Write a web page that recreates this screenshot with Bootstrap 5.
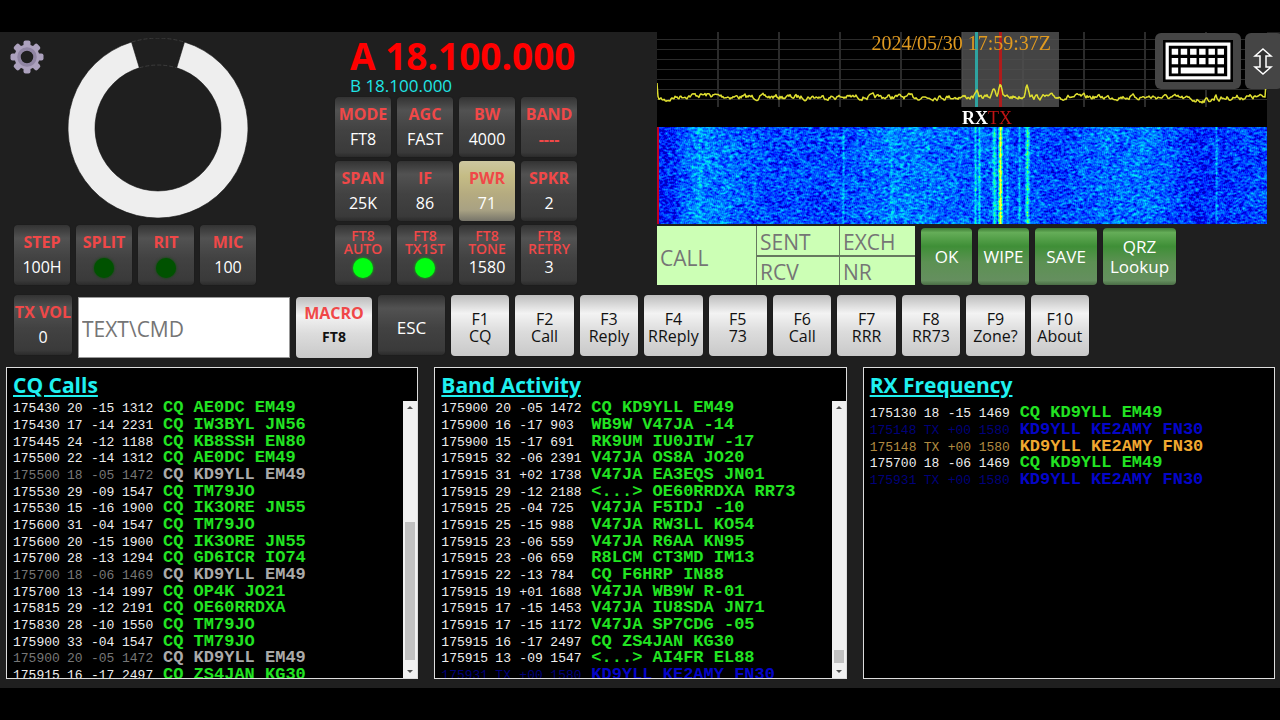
<!DOCTYPE html>
<html lang="en" data-bs-theme="dark">
<head>
<meta charset="utf-8">
<meta name="viewport" content="width=device-width, initial-scale=1">
<title>Transceiver control</title>
<link href="https://cdn.jsdelivr.net/npm/bootstrap@5.3.0/dist/css/bootstrap.min.css" rel="stylesheet">
<style>
  body { background: #000; font-family: "Open Sans", "Noto Sans", sans-serif; font-size: 16px; overflow-x: hidden; }
  .rig { background: #1f1f1f; padding-bottom: 9px; overflow: hidden; }
  .rig-top { display: grid; grid-template-columns: 325px 322px minmax(0, 1fr); padding-left: 10px; }
  .gear { width: 34px; height: 34px; }
  .dial { margin-top: 6px; margin-bottom: 7px; }
  .key-grid { display: grid; grid-template-columns: repeat(4, 56px); gap: 4px 6px; }

  .key { border: 0; border-radius: 4px; padding: 0; overflow: hidden; text-align: center; white-space: nowrap; color: #fff; box-shadow: 0 0 1px #161616; }
  .key-dark { height: 60px; padding-top: 5px; display: flex; flex-direction: column; align-items: center; background: linear-gradient(#333 0, #525252 22%, #424242 55%, #3a3a3a 92%, #2b2b2b 100%); }
  .key-gold { background: linear-gradient(#cdc7a0 0, #c5bc85 25%, #b5ab80 55%, #a8a183 82%, #77756a 100%); }
  .key-light { height: 61px; color: #111; background: linear-gradient(#bdbdbd 0, #f3f3f3 30%, #dcdcdc 60%, #c9c9c9 100%); }
  .key-green { height: 57px; font-size: 17px; line-height: 20px; background: linear-gradient(#3c7a34 0, #65ad58 8%, #3f8f37 32%, #5c9153 60%, #658f5f 92%, #4a6d45 100%); }
  .key-name { color: #f04848; font-weight: 700; line-height: 25px; }
  .key-name-2 { color: #f04848; font-size: 14px; font-weight: 600; line-height: 13px; margin-top: -1px; }
  .key-value { line-height: 25px; }
  .led { width: 20px; height: 20px; margin-top: 3px; border-radius: 50%; background: #0f1; box-shadow: 0 0 3px #0c0; flex: none; }
  .led-off { background: #005200; box-shadow: 0 0 3px #005200; }

  .vfo-a { color: #f00; font-size: 37px; font-weight: 700; line-height: 42px; padding: 3px 0 0 15px; }
  .vfo-b { color: #1fe5e5; font-size: 17px; line-height: 17px; padding-left: 15px; margin-bottom: 3px; }

  .scope { margin: 0 13px 2px 0; }
  .scope canvas { display: block; width: 100%; }
  .scope-clock { color: #e09a20; font: 20px/22px "Liberation Serif", serif; position: absolute; right: 216px; top: 0; }
  .scope-marks { font: 18px/20px "Liberation Serif", serif; color: #c01414; position: absolute; left: 50%; top: 76px; }
  .scope-tools { position: absolute; top: 1px; right: -16px; gap: 4px; }
  .tool { background: #454545; border: 0; border-radius: 6px; height: 56px; padding: 0; }

  .log-form { display: grid; grid-template: 29px 28px / 99px 82px 75px; gap: 2px 1px; background: #66785f; }
  .log-form input { border: 0; border-radius: 0; padding: 2px 3px 0; font-size: 21px; line-height: 26px; background: #ccffb5; color: #333; min-width: 0; }
  .log-form .call-box { grid-row: span 2; padding-top: 4px; }
  input::placeholder { color: #757575; opacity: 1; }
  .log-actions { gap: 6px; margin-left: 6px; }
  .log-actions .key { width: 51px; }
  .log-actions .key:nth-child(3) { width: 62px; }
  .log-actions .key:nth-child(4) { width: 73px; }

  .cmd-row { padding-left: 14px; margin-top: 10px; gap: 6px; }
  .cmd-box { width: 212px; height: 61px; background: #fff; border: 1px solid #999; border-radius: 0; padding: 2px 3px 0; font-size: 21px; color: #222; }
  .cmd-row .cmd-box, .cmd-row .key-macro { margin-top: 2px; }
  .key-vol { width: 58px; }
  .key-macro { width: 76px; padding-top: 4px; }
  .key-mode { font-size: 14px; line-height: 22px; }
  .key-esc { width: 67px; font-size: 17px; justify-content: center; }
  .fn-keys { display: grid; grid-template-columns: repeat(10, minmax(0, 1fr)); gap: 6px; flex: 0 1 638px; }
  .fn-keys .key { line-height: 17px; padding-top: 4px; }

  .boards { display: grid; grid-template-columns: repeat(3, minmax(0, 1fr)); gap: 16px; padding: 0 5px 0 6px; margin-top: 9px; }
  .board { background: #000; border: 1px solid #ddd; height: 312px; overflow: hidden; display: flex; flex-direction: column; }
  .board h2 { color: #1ff0f0; font-size: 21px; font-weight: 700; line-height: 33px; margin: 1px 0 0; padding-left: 6px; text-decoration: underline; text-decoration-thickness: 2px; text-underline-offset: 2px; height: 32px; flex: none; }
  .board-scroll { flex: 1; min-height: 0; display: flex; }
  .board-view { flex: 1; overflow: hidden; padding-left: 6px; }
  .board-late { padding-top: 5px; }
  .decodes { font-family: "Liberation Mono", monospace; font-size: 13px; color: #eee; white-space: nowrap; border-collapse: collapse; }
  .decodes td { padding: 0; height: 17px; line-height: 12px; vertical-align: baseline; }
  .decodes tr:nth-child(3n) td { height: 16px; }
  .decodes .c-time { width: 54px; }
  .decodes .c-db { width: 24px; }
  .decodes .c-dt { width: 31px; }
  .decodes .c-hz { width: 41px; }
  .decodes .c-msg { font-size: 17px; line-height: 14px; font-weight: 700; color: #22e322; }
  .decodes .worked { color: #777; }
  .decodes .worked .c-msg { color: #aaa; }
  .decodes .sent { color: #00007a; }
  .decodes .sent .c-msg { color: #0505c8; }
  .decodes .mine { color: #b08a40; }
  .decodes .mine .c-msg { color: #f0a830; }

  .bar { width: 14px; background: #f1f1f1; display: flex; flex-direction: column; align-items: center; justify-content: space-between; }
  .bar svg { width: 14px; height: 13px; display: block; flex: none; }
  .bar-lane { flex: 1; width: 10px; display: flex; flex-direction: column; justify-content: flex-end; }
  .bar-thumb { background: #c1c1c1; }
</style>
</head>
<body class="min-vh-100 d-flex flex-column justify-content-center">
<main class="rig w-100">
  <div class="rig-top">
    <section>
      <div class="d-flex gap-4">
        <a href="#settings" aria-label="Settings" class="mt-2">
          <svg class="gear" viewBox="0 0 34 34" aria-hidden="true">
            <g fill="#aca1bd">
              <g id="cog"><rect x="13.5" y=".5" width="7" height="33" rx="2"/><rect x=".5" y="13.5" width="33" height="7" rx="2"/></g>
              <use href="#cog" transform="rotate(45 17 17)"/>
              <circle cx="17" cy="17" r="12.5"/>
            </g>
            <circle cx="17" cy="17" r="8" fill="#1f1f1f" stroke="#9085a3" stroke-width="3.5"/>
            <circle cx="17" cy="17" r="5.5" fill="#1f1f1f"/>
          </svg>
        </a>
        <svg width="180" height="180" viewBox="0 0 180 180" class="dial" role="img" aria-label="Tuning dial">
          <path d="M63.8 4A90 90 0 0 1 116.200 4M71.500 29.800A63 63 0 0 1 108.500 29.800" fill="none" stroke="#3c3c3c" stroke-width="1" stroke-dasharray="4 2"/>
          <path d="M116.500 4A90 90 0 1 1 63.500 4L71.300 29.800A63 63 0 1 0 108.700 29.800Z" fill="#eee" stroke="#111" stroke-width=".6"/>
        </svg>
      </div>
      <div class="key-grid ms-1">
        <button class="key key-dark"><span class="key-name">STEP</span><span class="key-value">100H</span></button>
        <button class="key key-dark"><span class="key-name">SPLIT</span><span class="led led-off"></span></button>
        <button class="key key-dark"><span class="key-name">RIT</span><span class="led led-off"></span></button>
        <button class="key key-dark"><span class="key-name">MIC</span><span class="key-value">100</span></button>
      </div>
    </section>

    <section>
      <div class="vfo-a">A 18.100.000</div>
      <div class="vfo-b">B 18.100.000</div>
      <div class="key-grid">
        <button class="key key-dark"><span class="key-name">MODE</span><span class="key-value">FT8</span></button>
        <button class="key key-dark"><span class="key-name">AGC</span><span class="key-value">FAST</span></button>
        <button class="key key-dark"><span class="key-name">BW</span><span class="key-value">4000</span></button>
        <button class="key key-dark"><span class="key-name">BAND</span><span class="key-name">----</span></button>
        <button class="key key-dark"><span class="key-name">SPAN</span><span class="key-value">25K</span></button>
        <button class="key key-dark"><span class="key-name">IF</span><span class="key-value">86</span></button>
        <button class="key key-dark key-gold"><span class="key-name">PWR</span><span class="key-value">71</span></button>
        <button class="key key-dark"><span class="key-name">SPKR</span><span class="key-value">2</span></button>
        <button class="key key-dark"><span class="key-name-2">FT8<br>AUTO</span><span class="led"></span></button>
        <button class="key key-dark"><span class="key-name-2">FT8<br>TX1ST</span><span class="led"></span></button>
        <button class="key key-dark"><span class="key-name-2">FT8<br>TONE</span><span class="key-value">1580</span></button>
        <button class="key key-dark"><span class="key-name-2">FT8<br>RETRY</span><span class="key-value">3</span></button>
      </div>
    </section>

    <section>
      <div class="scope position-relative">
        <canvas id="spectrum" width="610" height="95"></canvas>
        <canvas id="waterfall" width="610" height="97"></canvas>
        <div class="scope-clock">2024/05/30 17:59:37Z</div>
        <div class="scope-marks"><b class="text-white">RX</b><span>TX</span></div>
        <div class="scope-tools d-flex">
          <button class="tool px-2" aria-label="Keyboard">
            <svg width="70" height="42" viewBox="0 0 217 130" aria-hidden="true">
              <path fill="#000" d="M0 0h217v130H0z"/>
              <path fill="none" stroke="#fff" stroke-width="10" d="M13 13h191v104H13z"/>
              <path fill="#fff" d="M27 27h20v19H27zM55 27h20v19H55zM84 27h20v19H84zM112 27h20v19h-20zM141 27h20v19h-20zM169 27h20v19h-20zM27 56h20v19H27zM55 56h20v19H55zM84 56h20v19H84zM112 56h20v19h-20zM141 56h20v19h-20zM169 56h20v19h-20zM27 85h20v19H27zM55 85h105v19H55zM169 85h20v19h-20z"/>
            </svg>
          </button>
          <button class="tool px-2" aria-label="Resize">
            <svg width="22" height="28" viewBox="0 0 22 28" aria-hidden="true"><path d="M10 3l8 7h-5v11h5l-8 7-8-7h5V10H2z" transform="translate(0 -1)" fill="#333" stroke="#fff" stroke-width="1.5"/></svg>
          </button>
        </div>
      </div>
      <div class="d-flex align-items-end">
        <form class="log-form">
          <input class="call-box" placeholder="CALL" aria-label="Call">
          <input placeholder="SENT" aria-label="Sent"><input placeholder="EXCH" aria-label="Exchange">
          <input placeholder="RCV" aria-label="Received"><input placeholder="NR" aria-label="Number">
        </form>
        <div class="log-actions d-flex">
          <button class="key key-green">OK</button>
          <button class="key key-green">WIPE</button>
          <button class="key key-green">SAVE</button>
          <button class="key key-green">QRZ<br>Lookup</button>
        </div>
      </div>
    </section>
  </div>

  <div class="cmd-row d-flex align-items-start">
    <button class="key key-dark key-vol"><span class="key-name">TX VOL</span><span class="key-value">0</span></button>
    <input class="cmd-box" placeholder="TEXT\CMD" aria-label="Text or command">
    <button class="key key-light key-macro d-flex flex-column align-items-center"><span class="key-name">MACRO</span><b class="key-mode">FT8</b></button>
    <button class="key key-dark key-esc">ESC</button>
    <div class="fn-keys">
      <button class="key key-light">F1<br>CQ</button>
      <button class="key key-light">F2<br>Call</button>
      <button class="key key-light">F3<br>Reply</button>
      <button class="key key-light">F4<br>RReply</button>
      <button class="key key-light">F5<br>73</button>
      <button class="key key-light">F6<br>Call</button>
      <button class="key key-light">F7<br>RRR</button>
      <button class="key key-light">F8<br>RR73</button>
      <button class="key key-light">F9<br>Zone?</button>
      <button class="key key-light">F10<br>About</button>
    </div>
  </div>

  <div class="boards">
    <section class="board">
      <h2>CQ Calls</h2>
      <div class="board-scroll">
        <div class="board-view"><table class="decodes" id="cq"></table></div>
        <div class="bar" id="cq-bar"></div>
      </div>
    </section>
    <section class="board">
      <h2>Band Activity</h2>
      <div class="board-scroll">
        <div class="board-view"><table class="decodes" id="band"></table></div>
        <div class="bar" id="band-bar"></div>
      </div>
    </section>
    <section class="board">
      <h2>RX Frequency</h2>
      <div class="board-scroll">
        <div class="board-view board-late"><table class="decodes" id="rx"></table></div>
      </div>
    </section>
  </div>
</main>

<script src="https://cdn.jsdelivr.net/npm/bootstrap@5.3.0/dist/js/bootstrap.bundle.min.js"></script>
<script>
  // Decoded messages: "time dB dt Hz|message|state"
  const logs = {
    cq: [
      '175430 20 -15 1312|CQ AE0DC EM49', '175430 17 -14 2231|CQ IW3BYL JN56', '175445 24 -12 1188|CQ KB8SSH EN80',
      '175500 22 -14 1312|CQ AE0DC EM49', '175500 18 -05 1472|CQ KD9YLL EM49|worked', '175530 29 -09 1547|CQ TM79JO',
      '175530 15 -16 1900|CQ IK3ORE JN55', '175600 31 -04 1547|CQ TM79JO', '175600 20 -15 1900|CQ IK3ORE JN55',
      '175700 28 -13 1294|CQ GD6ICR IO74', '175700 18 -06 1469|CQ KD9YLL EM49|worked', '175700 13 -14 1997|CQ OP4K JO21',
      '175815 29 -12 2191|CQ OE60RRDXA', '175830 28 -10 1550|CQ TM79JO', '175900 33 -04 1547|CQ TM79JO',
      '175900 20 -05 1472|CQ KD9YLL EM49|worked', '175915 16 -17 2497|CQ ZS4JAN KG30'],
    band: [
      '175900 20 -05 1472|CQ KD9YLL EM49', '175900 16 -17 903|WB9W V47JA -14', '175900 15 -17 691|RK9UM IU0JIW -17',
      '175915 32 -06 2391|V47JA OS8A JO20', '175915 31 +02 1738|V47JA EA3EQS JN01', '175915 29 -12 2188|<...> OE60RRDXA RR73',
      '175915 25 -04 725|V47JA F5IDJ -10', '175915 25 -15 988|V47JA RW3LL KO54', '175915 23 -06 559|V47JA R6AA KN95',
      '175915 23 -06 659|R8LCM CT3MD IM13', '175915 22 -13 784|CQ F6HRP IN88', '175915 19 +01 1688|V47JA WB9W R-01',
      '175915 17 -15 1453|V47JA IU8SDA JN71', '175915 17 -15 1172|V47JA SP7CDG -05', '175915 16 -17 2497|CQ ZS4JAN KG30',
      '175915 13 -09 1547|<...> AI4FR EL88', '175931 TX +00 1580|KD9YLL KE2AMY FN30|sent'],
    rx: [
      '175130 18 -15 1469|CQ KD9YLL EM49', '175148 TX +00 1580|KD9YLL KE2AMY FN30|sent', '175148 TX +00 1580|KD9YLL KE2AMY FN30|mine',
      '175700 18 -06 1469|CQ KD9YLL EM49', '175931 TX +00 1580|KD9YLL KE2AMY FN30|sent']
  };
  for (const id in logs) {
    const table = document.getElementById(id);
    for (const line of logs[id]) {
      const [info, msg, state] = line.split('|');
      const row = table.insertRow();
      if (state) row.className = state;
      const cells = info.split(' ').concat(msg);
      ['c-time', 'c-db', 'c-dt', 'c-hz', 'c-msg'].forEach((name, i) => {
        const cell = row.insertCell();
        cell.className = name;
        cell.textContent = cells[i];
      });
    }
  }

  // Scroll bars: thumb size and distance from the end of the lane, in percent
  const arrow = d => `<svg viewBox="0 0 14 13" aria-hidden="true"><path d="${d}" fill="#505050"/></svg>`;
  function scrollBar(id, size, below) {
    document.getElementById(id).innerHTML = arrow('M4 8l3-3 3 3z') +
      `<div class="bar-lane"><div class="bar-thumb" style="height:${size}%"></div><div style="height:${below}%"></div></div>` +
      arrow('M4 5l3 3 3-3z');
  }
  scrollBar('cq-bar', 55, 2);
  scrollBar('band-bar', 5, 1);

  let seed = 7;
  const rnd = () => (seed = (seed * 16807) % 2147483647) / 2147483647;

  // Spectrum trace
  const s = document.getElementById('spectrum').getContext('2d');
  s.fillStyle = '#000'; s.fillRect(0, 0, 610, 95);
  s.fillStyle = '#2b2b2b';
  for (let y = 7; y < 70; y += 10) s.fillRect(0, y, 610, 1);
  for (let x = 61; x < 610; x += 61) s.fillRect(x - 1, 0, 2, 75);
  s.fillStyle = 'rgba(80,80,80,.85)'; s.fillRect(305, 0, 97, 75);
  s.fillStyle = '#2fa3a0'; s.fillRect(318, 0, 3, 75);
  s.fillStyle = '#b01c1c'; s.fillRect(342, 0, 3, 75);
  const peaks = [[337, 10, 2], [343, 14, 2], [370, 15, 2], [320, 4, 2], [559, 5, 1]];
  s.strokeStyle = '#dede30'; s.lineWidth = 1.5; s.lineJoin = 'round'; s.beginPath();
  s.moveTo(0, 51);
  let n = 0;
  for (let x = 1; x < 609; x++) {
    n = n * .6 + (rnd() - .5) * 4;
    let y = 65 + n - 2 * Math.exp(-((x - 45) ** 2) / 500) + 3 * Math.exp(-((x - 8) ** 2) / 80) + 3 * Math.exp(-((x - 545) ** 2) / 500);
    for (const [c, h, w] of peaks) y -= h * Math.exp(-((x - c) ** 2) / (w * w));
    s.lineTo(x, y);
  }
  s.lineTo(609, 51); s.stroke();

  // Waterfall: smoothed noise over a level that varies with frequency
  const w = document.getElementById('waterfall').getContext('2d');
  const img = w.createImageData(610, 97);
  const levels = [[0, .09], [15, .13], [30, .22], [42, .28], [58, .25], [80, .22], [110, .18], [150, .17], [185, .18], [215, .23], [240, .26], [270, .24], [300, .22], [330, .2], [370, .18], [410, .17], [440, .22], [490, .24], [520, .18], [540, .12], [565, .14], [610, .18]];
  const lines = [[42, .05, 2], [186, .14, 1], [234, .08, 2], [318, .22, 1], [322, .2, 1], [337, .28, 2], [343, .6, 2], [350, .12, 1], [362, .14, 1], [370, .36, 2], [559, .16, 1]];
  const level = x => {
    let i = 1;
    while (levels[i][0] < x) i++;
    const [x0, a] = levels[i - 1], [x1, b] = levels[i];
    let v = a + (b - a) * (x - x0) / (x1 - x0);
    for (const [c, h, d] of lines) if (Math.abs(x - c) <= d) v += h * (1 - Math.abs(x - c) / (d + 1));
    return v;
  };
  const noise = Array.from({ length: 100 * 613 }, rnd);
  for (let y = 0; y < 97; y++) for (let x = 0; x < 610; x++) {
    const k = y * 613 + x;
    const g = (noise[k] + noise[k + 1] + noise[k + 2] + noise[k + 613] + noise[k + 614] + noise[k + 615]) / 6;
    const v = Math.max(0, level(x) + (g - .5) * .6);
    const o = k - y * 3 << 2;
    const red = x < 2;
    img.data[o] = red ? 190 : Math.max(0, Math.min(255, (v - .48) * 900));
    img.data[o + 1] = red ? 0 : Math.max(0, Math.min(255, (v - .06) * 640));
    img.data[o + 2] = red ? 40 : v > .4 ? Math.max(60, 255 - (v - .4) * 800) : Math.min(255, 190 + v * 600);
    img.data[o + 3] = 255;
  }
  w.putImageData(img, 0, 0);
</script>
</body>
</html>
